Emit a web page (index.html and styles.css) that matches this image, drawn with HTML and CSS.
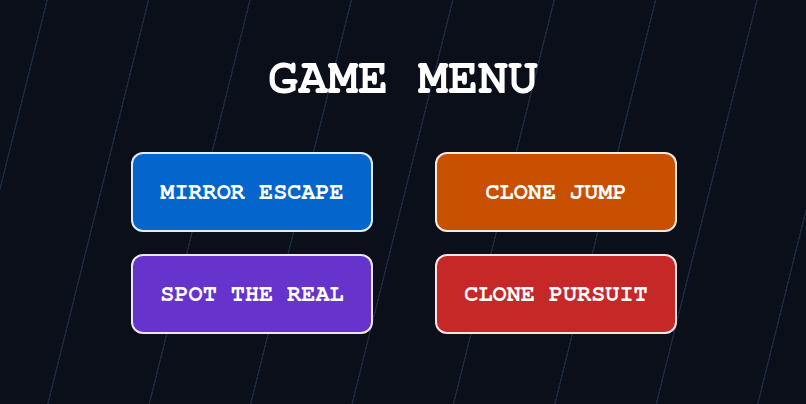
FILE: index.html
```html
<!DOCTYPE html>
<html lang="en">
<head>
<meta charset="utf-8">
<title>Game Menu</title>
<link rel="stylesheet" href="styles.css">
</head>
<body>
<main class="menu">
  <h1 class="menu-title">GAME MENU</h1>
  <div class="menu-grid">
    <button class="menu-btn btn-blue">MIRROR ESCAPE</button>
    <button class="menu-btn btn-orange">CLONE JUMP</button>
    <button class="menu-btn btn-purple">SPOT THE REAL</button>
    <button class="menu-btn btn-red">CLONE PURSUIT</button>
  </div>
</main>
</body>
</html>
```
FILE: styles.css
```css
html, body {
  margin: 0;
  padding: 0;
  width: 806px;
  height: 404px;
  overflow: hidden;
}

body {
  background-color: #0b0f19;
  background-image: repeating-linear-gradient(104deg,
    transparent 0px,
    transparent 44.8px,
    rgba(40, 62, 95, 0.55) 45.3px,
    rgba(40, 62, 95, 0.55) 46.2px,
    transparent 46.7px,
    transparent 98.4px);
  font-family: FreeMono, "Liberation Mono", "Courier New", monospace;
  color: #ffffff;
}

.menu {
  display: flex;
  flex-direction: column;
  align-items: center;
  padding-top: 52px;
}

.menu-title {
  margin: 0;
  font-size: 50px;
  line-height: 52px;
  font-weight: bold;
  color: #ffffff;
}

.menu-grid {
  display: grid;
  grid-template-columns: 242px 242px;
  column-gap: 62px;
  row-gap: 22px;
  margin-top: 48px;
  margin-left: 2px;
}

.menu-btn {
  box-sizing: border-box;
  height: 80px;
  border: 2px solid rgba(255, 255, 255, 0.88);
  border-radius: 12px;
  font-family: FreeMono, "Liberation Mono", "Courier New", monospace;
  font-size: 23.5px;
  font-weight: bold;
  color: #ffffff;
  padding: 0;
  cursor: pointer;
}

.btn-blue { background-color: #0466cc; }
.btn-orange { background-color: #c85000; }
.btn-purple { background-color: #6633cc; }
.btn-red { background-color: #c62828; }
```
